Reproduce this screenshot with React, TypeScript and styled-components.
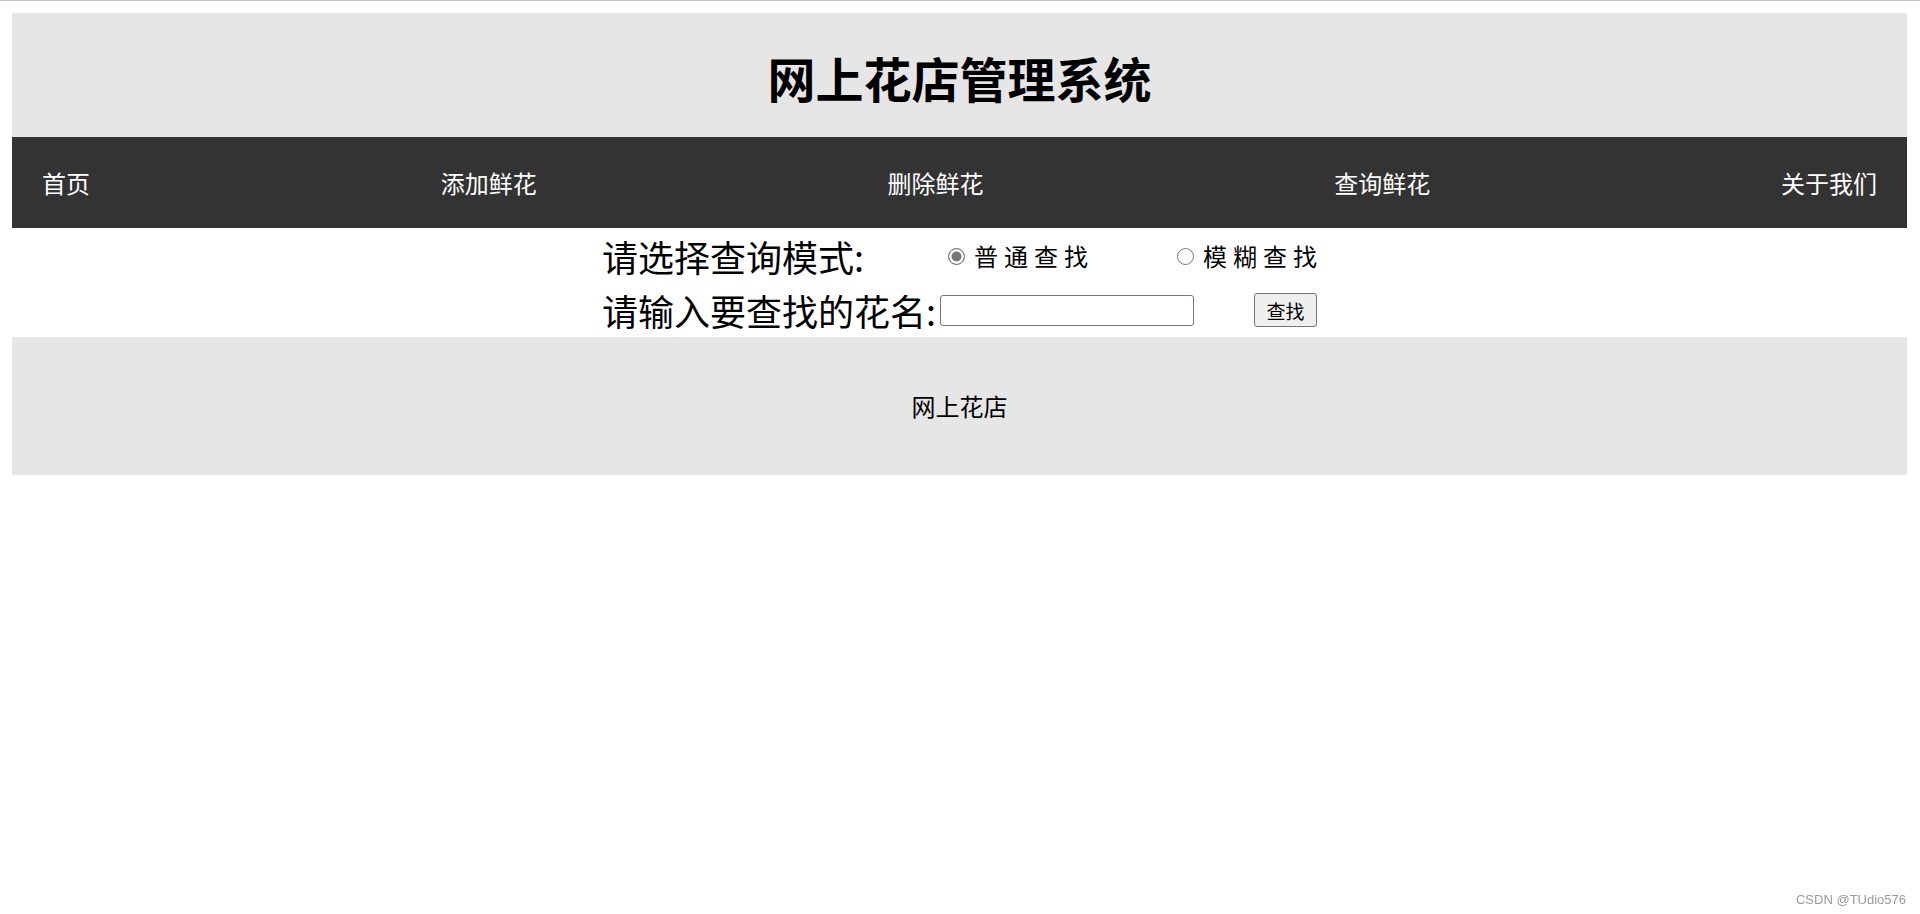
import styled, { createGlobalStyle } from 'styled-components';

const GlobalStyle = createGlobalStyle`
  html, body {
    margin: 0;
    padding: 0;
    background: #ffffff;
  }

  body {
    border-top: 1px solid #c4c4c4;
    font-family: 'Noto Sans CJK SC', 'Noto Sans', sans-serif;
    color: #000;
  }
`;

const Page = styled.div`
  padding: 12px 13px 0 12px;
`;

const Header = styled.header`
  display: flex;
  align-items: center;
  justify-content: center;
  height: 124px;
  background-color: #e6e6e6;
`;

const Title = styled.h1`
  margin: 0;
  font-size: 48px;
  font-weight: 700;
  line-height: 1;
  padding-top: 4px;
`;

const Nav = styled.nav`
  display: flex;
  align-items: center;
  justify-content: space-between;
  height: 91px;
  padding: 0 30px;
  background-color: #333333;
`;

const NavLink = styled.a`
  color: #ffffff;
  font-size: 24px;
  line-height: 1;
  text-decoration: none;
  cursor: pointer;
`;

const Search = styled.section`
  height: 109px;
  padding-top: 1px;
  box-sizing: border-box;
`;

const SearchForm = styled.form`
  display: grid;
  grid-template-columns: 338px 377px;
  grid-auto-rows: 54px;
  width: 715px;
  margin: 0 auto;
`;

const Label = styled.label`
  display: flex;
  align-items: center;
  font-size: 36px;
  line-height: 1;
  white-space: nowrap;
`;

const Field = styled.div`
  display: flex;
  align-items: center;
  justify-content: space-between;
`;

const Option = styled.label`
  display: flex;
  align-items: center;
  gap: 9px;
  padding-left: 8px;
  margin-right: -6px;
  font-size: 24px;
  letter-spacing: 6px;
  line-height: 1;
`;

const Radio = styled.input.attrs({ type: 'radio' })`
  appearance: none;
  flex-shrink: 0;
  width: 17px;
  height: 17px;
  margin: 0;
  border: 1.5px solid #767676;
  border-radius: 50%;
  background: #ffffff;
  box-sizing: border-box;

  &:checked {
    background: #767676;
    box-shadow: inset 0 0 0 2.5px #ffffff;
  }
`;

const TextInput = styled.input.attrs({ type: 'text' })`
  width: 254px;
  height: 31px;
  margin: 0;
  box-sizing: border-box;
  border: 1px solid #767676;
  border-radius: 3px;
  font-size: 18px;
`;

const Button = styled.button`
  width: 63px;
  height: 34px;
  padding: 0;
  border: 1px solid #767676;
  border-radius: 3px;
  background: #efefef;
  font-family: 'Noto Sans CJK SC', sans-serif;
  font-size: 19px;
  line-height: 1;
  color: #000;
`;

const Footer = styled.footer`
  display: flex;
  align-items: center;
  justify-content: center;
  height: 138px;
  background-color: #e6e6e6;
  font-size: 24px;
  line-height: 1;
`;

const Watermark = styled.div`
  position: fixed;
  right: 14px;
  bottom: 7px;
  font-family: 'Liberation Sans', Arial, sans-serif;
  font-size: 13px;
  color: #9a9a9a;
`;

const navItems = ['首页', '添加鲜花', '删除鲜花', '查询鲜花', '关于我们'];

const App = () => {
  return (
    <>
      <GlobalStyle />
      <Page>
        <Header>
          <Title>网上花店管理系统</Title>
        </Header>

        <Nav>
          {navItems.map(item => (
            <NavLink key={item}>{item}</NavLink>
          ))}
        </Nav>

        <Search>
          <SearchForm onSubmit={e => e.preventDefault()}>
            <Label>请选择查询模式:</Label>
            <Field>
              <Option>
                <Radio name="mode" defaultChecked />
                普通查找
              </Option>
              <Option>
                <Radio name="mode" />
                模糊查找
              </Option>
            </Field>

            <Label>请输入要查找的花名:</Label>
            <Field>
              <TextInput />
              <Button type="submit">查找</Button>
            </Field>
          </SearchForm>
        </Search>

        <Footer>网上花店</Footer>
      </Page>
      <Watermark>CSDN @TUdio576</Watermark>
    </>
  );
};

export default App;
